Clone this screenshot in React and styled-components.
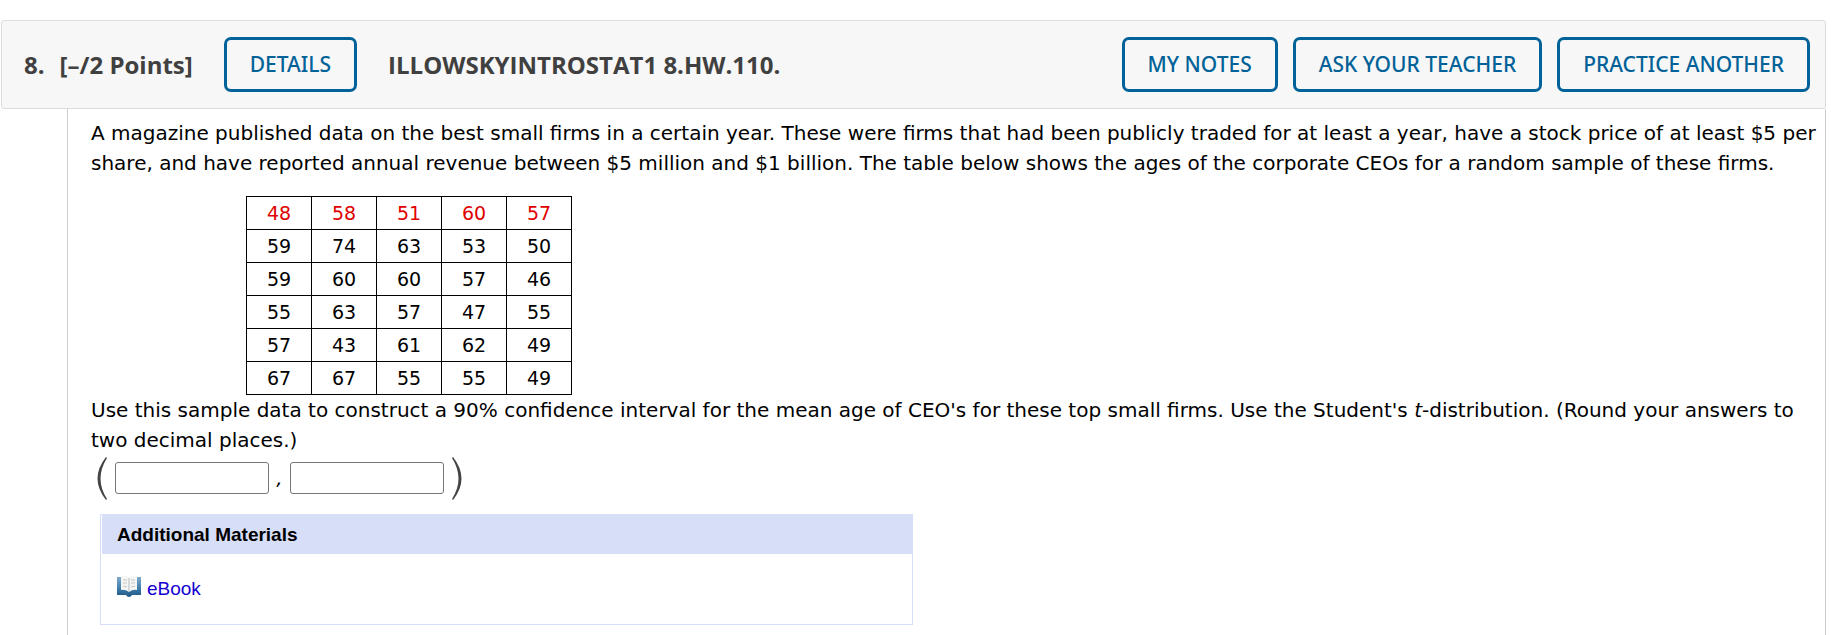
import React from 'react';
import styled, { createGlobalStyle } from 'styled-components';

const GlobalStyle = createGlobalStyle`
    * {
        box-sizing: border-box;
    }

    body {
        margin: 0;
        background: #fff;
        color: #000;
        font-family: 'DejaVu Sans', Verdana, sans-serif;
        font-size: 20px;
        line-height: 30px;
    }
`;

const Question = styled.section`
    min-height: 100vh;
    padding: 20px 6px 0 1px;
    display: flex;
    flex-direction: column;
`;

const Header = styled.header`
    display: flex;
    align-items: center;
    min-height: 89px;
    padding: 0 15px 0 22px;
    background: #f7f7f7;
    border: 1px solid #dcdcdc;
    border-radius: 3px;
    color: #404040;
    font-family: 'Open Sans', sans-serif;
`;

const Heading = styled.h2`
    margin: 0;
    font-size: 24px;
    font-weight: 700;
    white-space: nowrap;
`;

const Points = styled(Heading)`
    margin: 0 31px 0 15px;
`;

const Source = styled(Heading)`
    margin-left: 31px;
`;

const Actions = styled.div`
    display: flex;
    gap: 15px;
    margin-left: auto;
`;

const OutlineButton = styled.button`
    height: 55px;
    padding: 0 23px 2px;
    background: transparent;
    border: 3px solid #006298;
    border-radius: 7px;
    color: #006298;
    font-family: 'Noto Sans', 'Open Sans', sans-serif;
    font-size: 21px;
    font-weight: 500;
    white-space: nowrap;
    cursor: pointer;
`;

const Body = styled.div`
    flex: 1;
    margin-left: 66px;
    padding: 9px 4px 8px 23px;
    border: 1px solid #ccc;
    border-width: 0 1px;
`;

const Text = styled.p`
    margin: 0;
`;

const DataTable = styled.table`
    margin: 18px 0 0 155px;
    border-collapse: collapse;
    font-size: 19px;
    text-align: center;
`;

const Cell = styled.td`
    width: 65px;
    height: 33px;
    padding: 0;
    border: 1px solid #000;
    color: ${props => (props.$given ? '#e00000' : '#000')};
`;

const Answer = styled.div`
    display: flex;
    align-items: center;
    height: 46px;
    padding-left: 6px;
`;

const Paren = styled.svg`
    width: 10px;
    height: 43px;
    margin: ${props => (props.$close ? '0 0 0 8px' : '0 8px 0 0')};
    fill: #444;
`;

const AnswerBox = styled.input`
    width: 154px;
    height: 32px;
    padding: 2px 4px;
    border: 1px solid #767676;
    border-radius: 3px;
    font: inherit;
`;

const Comma = styled.i`
    width: 21px;
    text-align: center;
`;

const Materials = styled.section`
    max-width: 813px;
    margin: 13px 0 0 9px;
    border: 1px solid #d7def8;
    font-family: 'Liberation Sans', Arial, sans-serif;
    font-size: 19px;
`;

const MaterialsTitle = styled.h3`
    margin: 0 0 0 1px;
    padding: 5px 15px 4px;
    background: #d7def8;
    font-size: 19px;
    font-weight: 700;
`;

const MaterialsLink = styled.a`
    display: flex;
    align-items: center;
    gap: 6px;
    padding: 20px 16px;
    color: #1400d2;
    text-decoration: none;
`;

const BookIcon = styled.svg`
    width: 24px;
    height: 21px;
    margin-bottom: 5px;
`;

const ages = [
    [48, 58, 51, 60, 57],
    [59, 74, 63, 53, 50],
    [59, 60, 60, 57, 46],
    [55, 63, 57, 47, 55],
    [57, 43, 61, 62, 49],
    [67, 67, 55, 55, 49]
];

const Bracket = ({ close }) => (
    <Paren $close={close} viewBox='0 0 10 43' aria-hidden='true'>
        <path
            d={close
                ? 'M1 0 Q18 21.5 1 43 L0 42 Q13 21.5 0 1 Z'
                : 'M9 0 Q-8 21.5 9 43 L10 42 Q-3 21.5 10 1 Z'}
        />
    </Paren>
);

const Book = () => (
    <BookIcon viewBox='0 0 24 21' aria-hidden='true'>
        <defs>
            <linearGradient id='cover' x1='0' y1='0' x2='0' y2='1'>
                <stop offset='0' stopColor='#7fabcc' />
                <stop offset='0.6' stopColor='#3d7aa8' />
                <stop offset='1' stopColor='#1c5583' />
            </linearGradient>
        </defs>
        <path d='M0 1 H24 V19 H15 Q14 21 12 21 Q10 21 9 19 H0 Z' fill='url(#cover)' />
        <path d='M4 1 Q8 -1 12 1 Q16 -1 20 1 V14 Q16 13 12 16 Q8 13 4 14 Z' fill='#f5f5f3' />
        <path d='M12 2 V16' stroke='#b4bdc2' strokeWidth='1' />
        <path
            d='M6 4 L10 4 M6 7 L10 7 M6 10 L10 11 M14 4 L18 4 M14 7 L18 7 M14 11 L18 10'
            stroke='#c2c5c6'
            strokeWidth='1'
        />
    </BookIcon>
);

const App = () => {
    return (
        <>
            <GlobalStyle />
            <Question>
                <Header>
                    <Heading>8.</Heading>
                    <Points>[–/2 Points]</Points>
                    <OutlineButton type='button'>DETAILS</OutlineButton>
                    <Source>ILLOWSKYINTROSTAT1 8.HW.110.</Source>
                    <Actions>
                        <OutlineButton type='button'>MY NOTES</OutlineButton>
                        <OutlineButton type='button'>ASK YOUR TEACHER</OutlineButton>
                        <OutlineButton type='button'>PRACTICE ANOTHER</OutlineButton>
                    </Actions>
                </Header>

                <Body>
                    <Text>
                        A magazine published data on the best small firms in a certain year. These were firms
                        that had been publicly traded for at least a year, have a stock price of at least $5 per
                        share, and have reported annual revenue between $5 million and $1 billion. The table
                        below shows the ages of the corporate CEOs for a random sample of these firms.
                    </Text>

                    <DataTable>
                        <tbody>
                            {ages.map((row, i) => (
                                <tr key={i}>
                                    {row.map((age, j) => (
                                        <Cell key={j} $given={i === 0}>{age}</Cell>
                                    ))}
                                </tr>
                            ))}
                        </tbody>
                    </DataTable>

                    <Text>
                        Use this sample data to construct a 90% confidence interval for the mean age of CEO's
                        for these top small firms. Use the Student's <i>t</i>-distribution. (Round your answers
                        to two decimal places.)
                    </Text>

                    <Answer>
                        <Bracket />
                        <AnswerBox type='text' aria-label='Lower bound' />
                        <Comma>,</Comma>
                        <AnswerBox type='text' aria-label='Upper bound' />
                        <Bracket close />
                    </Answer>

                    <Materials>
                        <MaterialsTitle>Additional Materials</MaterialsTitle>
                        <MaterialsLink href='#ebook'>
                            <Book />
                            eBook
                        </MaterialsLink>
                    </Materials>
                </Body>
            </Question>
        </>
    );
};

export default App;
